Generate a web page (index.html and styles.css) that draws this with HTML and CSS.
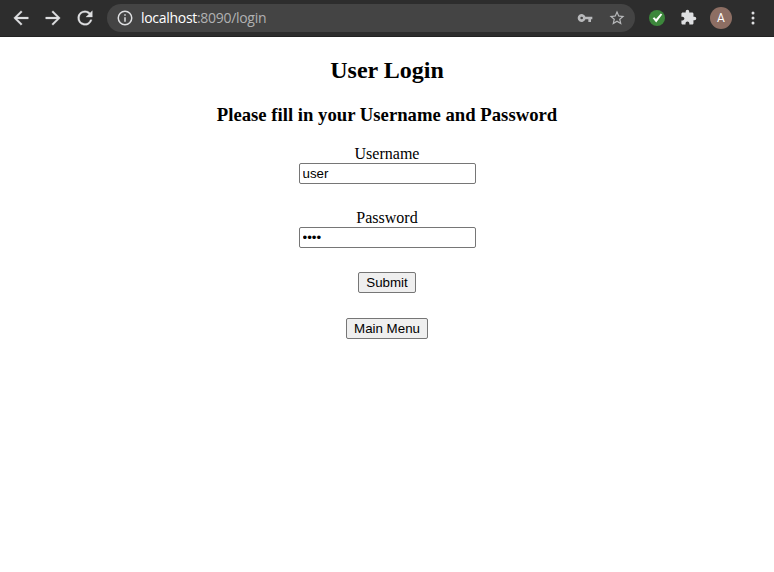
FILE: index.html
```html
<!DOCTYPE html>
<html lang="en">
<head>
<meta charset="utf-8">
<title>User Login</title>
<link rel="stylesheet" href="styles.css">
</head>
<body>
<header class="toolbar">
  <nav class="nav">
    <svg class="icon" viewBox="0 0 24 24"><path d="M20 11H7.83l5.59-5.59L12 4l-8 8 8 8 1.41-1.41L7.83 13H20v-2z"/></svg>
    <svg class="icon" viewBox="0 0 24 24"><path d="M12 4l-1.41 1.41L16.17 11H4v2h12.17l-5.58 5.59L12 20l8-8z"/></svg>
    <svg class="icon" viewBox="0 0 24 24"><path d="M17.65 6.35C16.2 4.9 14.21 4 12 4a8 8 0 1 0 7.73 10h-2.08A6 6 0 1 1 12 6c1.66 0 3.14.69 4.22 1.78L13 11h7V4l-2.35 2.35z"/></svg>
  </nav>
  <div class="address">
    <svg class="info" viewBox="0 0 24 24"><path d="M11 7h2v2h-2zm0 4h2v6h-2zm1-9a10 10 0 1 0 0 20 10 10 0 0 0 0-20zm0 18a8 8 0 1 1 0-16 8 8 0 0 1 0 16z"/></svg>
    <span class="url"><span class="host">localhost</span>:8090/login</span>
    <svg class="key" viewBox="0 0 24 24"><path d="M12.65 10A6 6 0 1 0 12.65 14H17v4h4v-4h2v-4H12.65zM7 14a2 2 0 1 1 0-4 2 2 0 0 1 0 4z"/></svg>
    <svg class="star" viewBox="0 0 24 24"><path d="M22 9.24l-7.19-.62L12 2 9.19 8.63 2 9.24l5.46 4.73L5.82 21 12 17.27 18.18 21l-1.63-7.03L22 9.24zM12 15.4l-3.76 2.27 1-4.28-3.32-2.88 4.38-.38L12 6.1l1.71 4.04 4.38.38-3.32 2.88 1 4.28L12 15.4z"/></svg>
  </div>
  <svg class="check" viewBox="0 0 16 16"><circle cx="8" cy="8" r="8" fill="#3c873b"/><path d="M3.700 8.300 5.300 7.200 7 9.100 11.800 3.400 13.200 4.500 7.200 12.600z" fill="#fff"/></svg>
  <svg class="puzzle" viewBox="0 0 24 24"><path d="M20.5 11H19V7c0-1.100-.9-2-2-2h-4V3.500a2.500 2.500 0 0 0-5 0V5H4c-1.100 0-1.990.9-1.990 2v3.800H3.500c1.490 0 2.700 1.210 2.700 2.700s-1.210 2.700-2.700 2.700H2V20c0 1.100.9 2 2 2h3.800v-1.500c0-1.490 1.210-2.700 2.700-2.700s2.700 1.210 2.700 2.700V22H17c1.100 0 2-.9 2-2v-4h1.500a2.500 2.500 0 0 0 0-5z"/></svg>
  <span class="avatar">A</span>
  <svg class="more" viewBox="0 0 20 20"><circle cx="10" cy="5" r="1.500"/><circle cx="10" cy="10" r="1.500"/><circle cx="10" cy="15" r="1.500"/></svg>
</header>
<main class="page">
  <h2 class="title">User Login</h2>
  <h3 class="subtitle">Please fill in your Username and Password</h3>
  <form class="form">
    <label class="label" for="username">Username</label>
    <input class="field" id="username" type="text" value="user">
    <label class="label" for="password">Password</label>
    <input class="field last" id="password" type="password" value="user">
    <button class="button" type="button">Submit</button>
    <button class="button menu" type="button">Main Menu</button>
  </form>
</main>
</body>
</html>
```
FILE: styles.css
```css
* { box-sizing: border-box; }
body {
  margin: 0;
  background: #fff;
  color: #000;
  font: 16px "Liberation Serif", serif;
}
svg { display: block; flex: none; fill: #dedfe1; }
.toolbar {
  display: flex;
  align-items: center;
  height: 37px;
  padding: 0 11px 1px 10px;
  background: #2d2d2d;
  border-bottom: 1px solid #222;
}
.nav { display: flex; gap: 10px; }
.icon { width: 22px; height: 22px; stroke: #dedfe1; stroke-width: .3; }
.address {
  display: flex;
  align-items: center;
  width: 528px;
  height: 28px;
  margin-left: 11px;
  padding: 0 9px;
  border-radius: 14px;
  background: #444;
}
.info { width: 18px; height: 18px; }
.url {
  flex: 1;
  margin-left: 7px;
  color: #b0b1b2;
  font: 14px/20px "Open Sans", sans-serif;
  letter-spacing: -0.3px;
}
.host { color: #fff; }
.key { width: 16px; height: 16px; margin-right: 15px; fill: #b8b9bb; }
.star { width: 18px; height: 18px; fill: #b8b9bb; }
.check { width: 16px; height: 16px; margin-left: 14px; }
.puzzle { width: 17px; height: 17px; margin-left: 15px; }
.avatar {
  width: 22px;
  height: 22px;
  margin-left: 13px;
  border-radius: 50%;
  background: #8d6e63;
  color: #fff;
  text-align: center;
  font: 12px/23px Roboto, sans-serif;
}
.more { width: 20px; height: 20px; margin-left: 11px; }
.page { padding: 20px 8px 0; text-align: center; }
.title { margin: 0 0 20px; font-size: 24px; line-height: 27px; }
.subtitle { margin: 0 0 19px; font-size: 18.72px; line-height: 22px; }
.form { display: flex; flex-direction: column; align-items: center; }
.label { line-height: 18px; }
.field {
  width: 177px;
  height: 21px;
  margin: 0 0 25px;
  padding: 1px 3px;
  border: 1px solid #767676;
  border-radius: 2px;
  background: #fff;
  color: #000;
  font: 13.333px "Liberation Sans", sans-serif;
}
.last { margin-bottom: 24px; }
.button {
  width: 58px;
  height: 21px;
  margin: 0 0 25px;
  padding: 0;
  border: 1px solid #767676;
  border-radius: 2px;
  background: #efefef;
  color: #000;
  font: 13.333px "Liberation Sans", sans-serif;
}
.menu { width: 82px; }
```
